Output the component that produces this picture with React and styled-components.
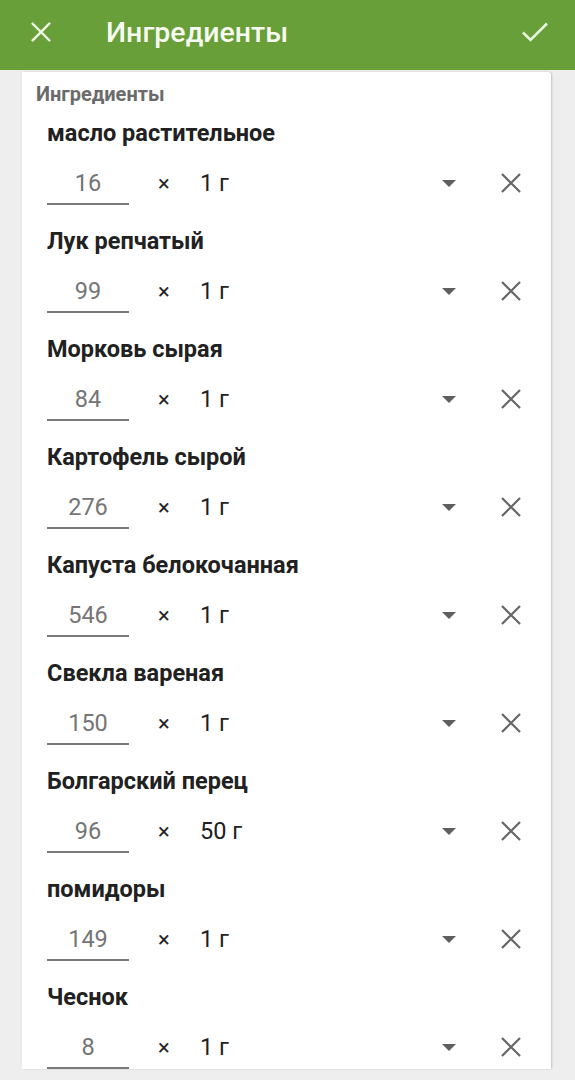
import styled, { createGlobalStyle } from "styled-components";

const GlobalStyle = createGlobalStyle`
  html, body {
    margin: 0;
    padding: 0;
    background: #eeeeee;
    font-family: Roboto, "Noto Sans", sans-serif;
  }
`;

const Page = styled.div`
  width: 575px;
  height: 1080px;
  overflow: hidden;
  background: #eeeeee;
`;

const Toolbar = styled.header`
  height: 70px;
  background: #689f38;
  display: flex;
  align-items: center;
  padding: 0 26px 0 30px;
  box-sizing: border-box;
  color: #ffffff;
`;

const Title = styled.h1`
  flex: 1;
  margin: 0 0 6px 54px;
  font-size: 28.5px;
  font-weight: 500;
  color: #f7fbf2;
`;

const IconButton = styled.button`
  border: 0;
  background: none;
  padding: 0;
  display: flex;
  margin-bottom: 6px;
`;

const Card = styled.section`
  margin: 2px 24px 0 22px;
  height: 997px;
  overflow: hidden;
  background: #ffffff;
  border-radius: 0 3px 0 0;
  box-shadow: 1px 0 2px rgba(0, 0, 0, 0.18);
  padding: 11px 0 0 25px;
  box-sizing: border-box;
`;

const SectionLabel = styled.div`
  margin-left: -11px;
  font-size: 20px;
  line-height: 22px;
  font-weight: 700;
  color: #6b6b6b;
`;

const Item = styled.div`
  padding-top: ${(p) => (p.$first ? "14px" : "20px")};
`;

const Name = styled.div`
  font-size: 23.5px;
  line-height: 28px;
  font-weight: 700;
  color: #212121;
`;

const Row = styled.div`
  margin-top: 12px;
  height: 48px;
  display: flex;
  align-items: flex-start;
  padding-right: 29px;
`;

const Amount = styled.div`
  width: 82px;
  height: 46px;
  box-sizing: border-box;
  border-bottom: 2px solid #7a7a7a;
  display: flex;
  align-items: center;
  justify-content: center;
  padding-top: 4px;
  font-size: 23.5px;
  color: #757575;
`;

const Trailing = styled.div`
  flex: 1;
  height: 48px;
  display: flex;
  align-items: center;
`;

const Times = styled.span`
  margin-left: 29px;
  width: 14px;
  font-size: 22px;
  color: #212121;
`;

const Unit = styled.span`
  margin-left: 28px;
  flex: 1;
  font-size: 23.5px;
  color: #212121;
`;

const Caret = styled.span`
  width: 0;
  height: 0;
  border-left: 7px solid transparent;
  border-right: 7px solid transparent;
  border-top: 7px solid #5f5f5f;
  margin-right: 44px;
`;

const ingredients = [
  { name: "масло растительное", amount: "16", unit: "1 г" },
  { name: "Лук репчатый", amount: "99", unit: "1 г" },
  { name: "Морковь сырая", amount: "84", unit: "1 г" },
  { name: "Картофель сырой", amount: "276", unit: "1 г" },
  { name: "Капуста белокочанная", amount: "546", unit: "1 г" },
  { name: "Свекла вареная", amount: "150", unit: "1 г" },
  { name: "Болгарский перец", amount: "96", unit: "50 г" },
  { name: "помидоры", amount: "149", unit: "1 г" },
  { name: "Чеснок", amount: "8", unit: "1 г" },
];

function CrossIcon({ size, color, width }) {
  return (
    <svg width={size} height={size} viewBox="0 0 24 24" fill="none">
      <path d="M3 3L21 21M21 3L3 21" stroke={color} strokeWidth={width} strokeLinecap="square" />
    </svg>
  );
}

function CheckIcon() {
  return (
    <svg width="28" height="24" viewBox="0 0 28 24" fill="none">
      <path d="M2 12.5L9.5 20L26 3.5" stroke="#e8f5dc" strokeWidth="2.6" />
    </svg>
  );
}

export default function App() {
  return (
    <Page>
      <GlobalStyle />
      <Toolbar>
        <IconButton>
          <CrossIcon size={22} color="#f1f8e9" width={2.6} />
        </IconButton>
        <Title>Ингредиенты</Title>
        <IconButton>
          <CheckIcon />
        </IconButton>
      </Toolbar>
      <Card>
        <SectionLabel>Ингредиенты</SectionLabel>
        {ingredients.map((item, i) => (
          <Item key={item.name} $first={i === 0}>
            <Name>{item.name}</Name>
            <Row>
              <Amount>{item.amount}</Amount>
              <Trailing>
                <Times>×</Times>
                <Unit>{item.unit}</Unit>
                <Caret />
                <CrossIcon size={22} color="#666666" width={2.4} />
              </Trailing>
            </Row>
          </Item>
        ))}
      </Card>
    </Page>
  );
}
